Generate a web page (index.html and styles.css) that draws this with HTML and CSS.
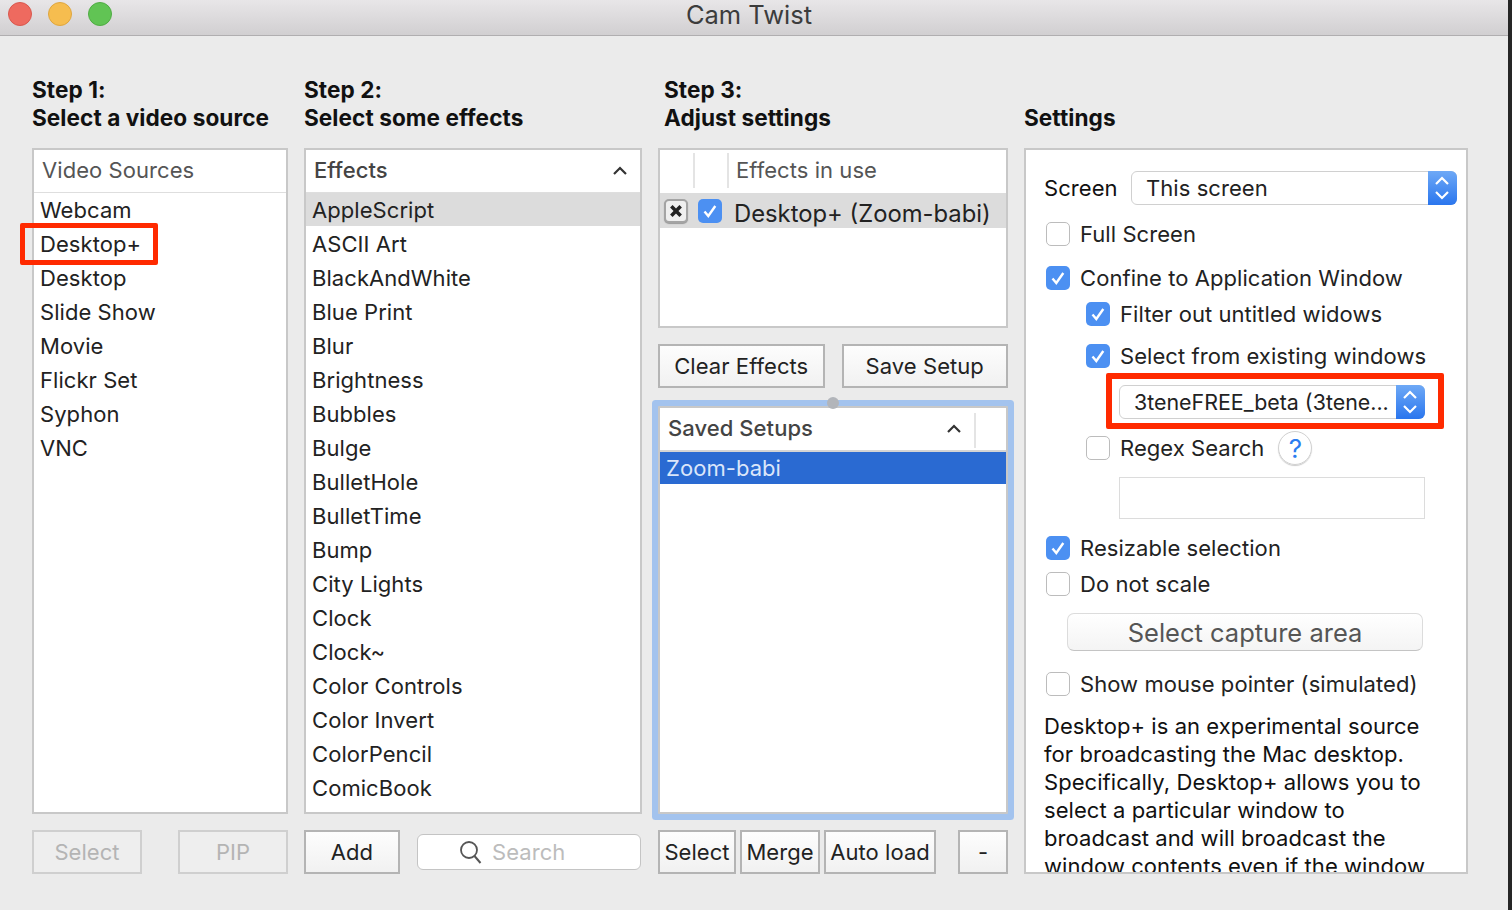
FILE: index.html
```html
<!DOCTYPE html>
<html lang="en">
<head>
<meta charset="utf-8">
<title>Cam Twist</title>
<link rel="stylesheet" href="styles.css">
</head>
<body>
<svg class="defs" width="0" height="0" aria-hidden="true">
  <symbol id="tick" viewBox="0 0 24 24"><rect width="24" height="24" rx="5" fill="#4c90f2"/><path d="M6.5 12.5l3.8 4.5 7-10" fill="none" stroke="#fff" stroke-width="2.4"/></symbol>
  <symbol id="updown" viewBox="0 0 28 34"><path d="M8 13l6-6 6 6M8 21l6 6 6-6" fill="none" stroke="#fff" stroke-width="2.2"/></symbol>
  <symbol id="chev" viewBox="0 0 16 10"><path d="M2 8l6-6 6 6" fill="none" stroke="#333" stroke-width="2.2"/></symbol>
</svg>
<div class="window">
  <header class="titlebar">
    <div class="lights"><span class="light red"></span><span class="light yellow"></span><span class="light green"></span></div>
    <div class="title">Cam Twist</div>
  </header>
  <main class="columns">
    <section class="col">
      <h2 class="heading">Step 1:<br>Select a video source</h2>
      <div class="panel grow">
        <div class="phead plain"><span class="ptitle light-title">Video Sources</span></div>
        <ul class="list">
          <li>Webcam</li>
          <li class="marked">Desktop+<span class="redbox one"></span></li>
          <li>Desktop</li>
          <li>Slide Show</li>
          <li>Movie</li>
          <li>Flickr Set</li>
          <li>Syphon</li>
          <li>VNC</li>
        </ul>
      </div>
      <div class="foot spread">
        <button class="btn off w110">Select</button>
        <button class="btn off w110">PIP</button>
      </div>
    </section>

    <section class="col">
      <h2 class="heading">Step 2:<br>Select some effects</h2>
      <div class="panel grow clip">
        <div class="phead plain between"><span class="ptitle strong">Effects</span><svg class="chev"><use href="#chev"/></svg></div>
        <ul class="list">
          <li class="sel">AppleScript</li>
          <li>ASCII Art</li>
          <li>BlackAndWhite</li>
          <li>Blue Print</li>
          <li>Blur</li>
          <li>Brightness</li>
          <li>Bubbles</li>
          <li>Bulge</li>
          <li>BulletHole</li>
          <li>BulletTime</li>
          <li>Bump</li>
          <li>City Lights</li>
          <li>Clock</li>
          <li>Clock~</li>
          <li>Color Controls</li>
          <li>Color Invert</li>
          <li>ColorPencil</li>
          <li>ComicBook</li>
        </ul>
      </div>
      <div class="foot">
        <button class="btn w96">Add</button>
        <div class="search">
          <svg class="mag" viewBox="0 0 24 24"><circle cx="10" cy="10" r="8" fill="none" stroke="#555" stroke-width="1.8"/><path d="M15.5 16l6 7" stroke="#555" stroke-width="2"/></svg>
          <span>Search</span>
        </div>
      </div>
    </section>

    <section class="col">
      <h2 class="heading inset">Step 3:<br>Adjust settings</h2>
      <div class="panel inuse">
        <div class="phead seps">
          <span class="sep s1"></span><span class="sep s2"></span>
          <span class="ptitle light-title">Effects in use</span>
        </div>
        <div class="userow">
          <span class="xbtn">
            <svg viewBox="0 0 12 12"><path d="M2 2l8 8M10 2l-8 8" stroke="#222" stroke-width="3"/></svg>
          </span>
          <svg class="cb"><use href="#tick"/></svg>
          <span class="usename">Desktop+ (Zoom-babi)</span>
        </div>
      </div>
      <div class="pair">
        <button class="btn flex1">Clear Effects</button>
        <button class="btn flex1">Save Setup</button>
      </div>
      <div class="panel grow saved">
        <span class="grip"></span>
        <div class="phead between savedhead">
          <span class="ptitle strong">Saved Setups</span>
          <svg class="chev"><use href="#chev"/></svg>
          <span class="sep s3"></span>
        </div>
        <div class="savedrow">Zoom-babi</div>
      </div>
      <div class="foot tight">
        <button class="btn w78">Select</button>
        <button class="btn w80">Merge</button>
        <button class="btn w112">Auto load</button>
        <button class="btn w50 push">-</button>
      </div>
    </section>

    <section class="col">
      <h2 class="heading">Settings</h2>
      <div class="panel settings grow clip">
        <div class="screenrow">
          <span class="lab">Screen</span>
          <div class="popup wide"><span>This screen</span><span class="stepper"><svg><use href="#updown"/></svg></span></div>
        </div>
        <label class="row m15"><span class="box"></span>Full Screen</label>
        <label class="row m16"><svg class="cb"><use href="#tick"/></svg>Confine to Application Window</label>
        <label class="row sub m8"><svg class="cb"><use href="#tick"/></svg>Filter out untitled widows</label>
        <label class="row sub m14"><svg class="cb"><use href="#tick"/></svg>Select from existing windows</label>
        <div class="popup narrow"><span class="nowrap">3teneFREE_beta (3tene...</span><span class="stepper"><svg><use href="#updown"/></svg></span><span class="redbox two"></span></div>
        <div class="row sub m15"><span class="box"></span>Regex Search<span class="help">?</span></div>
        <div class="field"></div>
        <label class="row m15"><svg class="cb"><use href="#tick"/></svg>Resizable selection</label>
        <label class="row m8"><span class="box"></span>Do not scale</label>
        <button class="capture">Select capture area</button>
        <label class="row m19"><span class="box"></span>Show mouse pointer (simulated)</label>
        <p class="desc">Desktop+ is an experimental source for broadcasting the Mac desktop. Specifically, Desktop+ allows you to select a particular window to broadcast and will broadcast the window contents even if the window is covered by other windows on the desktop.</p>
      </div>
    </section>
  </main>
</div>
<div class="edge"></div>
</body>
</html>
```
FILE: styles.css
```css
* { box-sizing: border-box; }
html, body { margin: 0; height: 910px; overflow: hidden; }
body {
  display: flex;
  font-family: Inter, "Liberation Sans", sans-serif;
  font-size: 22px;
  letter-spacing: .06px;
  color: #222;
  background: #222;
}
.defs { position: absolute; }
.window { width: 1508px; height: 910px; background: #ebebeb; display: flex; flex-direction: column; }
.edge { width: 4px; background: #262626; }

.titlebar {
  height: 36px;
  flex: none;
  display: flex;
  align-items: center;
  justify-content: center;
  position: relative;
  background: linear-gradient(#e8e6e8, #d1cfd1);
  border-bottom: 1px solid #b0aeb0;
}
.title { font-size: 25.5px; line-height: 30px; color: #3c3c3c; margin-top: -5px; margin-left: -10px; letter-spacing: 0; }
.lights { position: absolute; left: 8px; top: 2px; display: flex; gap: 16px; }
.light { width: 24px; height: 24px; border-radius: 50%; }
.red { background: #ee6a5f; border: 1px solid #d9584e; }
.yellow { background: #f6bd4f; border: 1px solid #dfa63f; }
.green { background: #61c454; border: 1px solid #50ac44; }

.columns {
  flex: 1;
  display: grid;
  grid-template-columns: 256px 338px 350px 444px;
  column-gap: 16px;
  padding: 40px 0 36px 32px;
  min-height: 0;
}
.col { display: flex; flex-direction: column; min-height: 0; }
.heading {
  height: 56px;
  margin: 0 0 16px;
  font-size: 22.6px;
  line-height: 28px;
  font-weight: 700;
  color: #111;
}
.inset { padding-left: 6px; }
.col:last-child .heading { padding-top: 28px; }

.panel { background: #fff; border: 2px solid #c8c8c8; position: relative; min-height: 0; }
.grow { flex: 1; }
.clip { overflow: hidden; }
.phead { height: 43px; display: flex; align-items: center; position: relative; }
.plain { padding-left: 8px; border-bottom: 1px solid #dedede; }
.between { justify-content: space-between; padding-right: 12px; }
.ptitle { font-size: 22px; color: #4a4a4a; margin-top: -3px; }
.light-title { color: #555; }
.strong { font-weight: 500; color: #444; }
.chev { width: 16px; height: 10px; }

.list { list-style: none; margin: 0; padding: 0; }
.list li { height: 34px; line-height: 34px; padding-left: 6px; position: relative; color: #222; }
.list li.sel { background: #dcdcdc; height: 33px; margin-bottom: 1px; }

.redbox { position: absolute; border: 5px solid #ff2a00; border-radius: 2px; pointer-events: none; }
.redbox.one { left: -14px; top: -4px; width: 138px; height: 42px; }
.redbox.two { left: -14px; top: -13px; width: 338px; height: 56px; border-width: 6px; }

.foot { margin-top: 16px; height: 44px; flex: none; display: flex; gap: 17px; }
.spread { justify-content: space-between; }
.tight { gap: 4px; }
.push { margin-left: 18px; }
.btn {
  height: 44px;
  padding: 0;
  font: inherit;
  letter-spacing: inherit;
  color: #222;
  border: 2px solid #b4b4b4;
  border-radius: 0;
  background: linear-gradient(#fdfdfd, #f1f1f1);
}
.btn.off { color: #b4b4b4; border-color: #cfcfcf; background: #eeeeee; }
.w110 { width: 110px; }
.w96 { width: 96px; }
.w78 { width: 78px; }
.w80 { width: 80px; }
.w112 { width: 112px; }
.w50 { width: 50px; }
.flex1 { flex: 1; }

.search {
  width: 224px;
  height: 36px;
  margin-top: 4px;
  background: #fff;
  border: 1px solid #c4c4c4;
  border-radius: 6px;
  display: flex;
  align-items: center;
  padding-left: 41px;
  gap: 9px;
  color: #bcbcbc;
}
.mag { width: 24px; height: 24px; }

.inuse { height: 180px; flex: none; }
.seps { padding-left: 76px; }
.sep { position: absolute; top: 3px; height: 35px; width: 2px; background: #e4e4e4; }
.s1 { left: 33px; }
.s2 { left: 67px; }
.s3 { left: 314px; top: 5px; }
.userow { height: 35px; background: #dcdcdc; display: flex; align-items: center; padding-left: 4px; white-space: nowrap; }
.xbtn {
  width: 24px;
  height: 24px;
  border: 2px solid #a4a4a4;
  border-radius: 5px;
  background: #efefef;
  display: flex;
  align-items: center;
  justify-content: center;
  margin-right: 10px;
  box-shadow: 0 1px 1px #999;
}
.xbtn svg { width: 14px; height: 14px; }
.cb { width: 24px; height: 24px; flex: none; }
.usename { font-size: 23.8px; margin-left: 12px; padding-top: 5px; color: #222; letter-spacing: 0; }

.pair { margin-top: 16px; height: 44px; flex: none; display: flex; gap: 17px; }
.saved {
  margin-top: 18px;
  box-shadow: 0 0 0 6px #a3c3ee;
  border-radius: 1px;
}
.grip {
  position: absolute;
  left: 167px;
  top: -11px;
  width: 12px;
  height: 12px;
  border-radius: 50%;
  background: #b2b5ba;
}
.savedhead { padding-left: 8px; padding-right: 44px; border-bottom: 2px solid #d4d4d4; height: 44px; }
.savedrow { height: 32px; line-height: 32px; padding-left: 6px; background: #2a6ad2; color: #dbe6fa; }

.settings { padding: 21px 9px 0 18px; }
.screenrow { display: flex; align-items: center; height: 34px; color: #111; }
.lab { color: #111; width: 87px; flex: none; }
.popup {
  height: 34px;
  display: flex;
  align-items: center;
  justify-content: space-between;
  background: #fff;
  border: 1px solid #d0d0d0;
  border-radius: 6px;
  position: relative;
  color: #222;
}
.nowrap { white-space: nowrap; font-size: 21.4px; letter-spacing: 0; }
.wide { width: 326px; padding-left: 14px; }
.narrow { width: 306px; padding-left: 14px; margin: 15px 0 0 75px; }
.stepper {
  width: 29px;
  height: 34px;
  flex: none;
  margin: -1px -1px -1px 0;
  border-radius: 0 6px 6px 0;
  background: linear-gradient(#6ea9f6, #2a76ee);
  display: block;
}
.stepper svg { width: 28px; height: 34px; display: block; }
.row { display: flex; align-items: center; height: 28px; gap: 10px; color: #222; margin-left: 2px; }
.sub { margin-left: 42px; }
.m8 { margin-top: 8px; }
.m14 { margin-top: 14px; }
.m15 { margin-top: 15px; }
.m16 { margin-top: 16px; }
.m19 { margin-top: 19px; }
.box {
  width: 24px;
  height: 24px;
  flex: none;
  border: 1px solid #bcbcbc;
  border-radius: 5px;
  background: #fff;
}
.help {
  width: 34px;
  height: 34px;
  margin-left: 4px;
  border: 1px solid #d0d0d0;
  border-radius: 50%;
  display: flex;
  align-items: center;
  justify-content: center;
  font-size: 26px;
  color: #2b7cf0;
  box-shadow: 0 1px 1px #ccc;
}
.field { width: 306px; height: 42px; margin: 15px 0 0 75px; border: 1px solid #dcdcdc; }
.capture {
  display: block;
  width: 356px;
  height: 38px;
  margin: 15px 0 0 23px;
  padding: 0;
  font: inherit;
  font-size: 25.5px;
  color: #555;
  background: linear-gradient(#fff, #f4f4f4);
  border: 1px solid #dcdcdc;
  border-bottom-color: #c4c4c4;
  border-radius: 7px;
}
.desc { width: 390px; margin: 14px 0 0; line-height: 28px; color: #111; }
```
